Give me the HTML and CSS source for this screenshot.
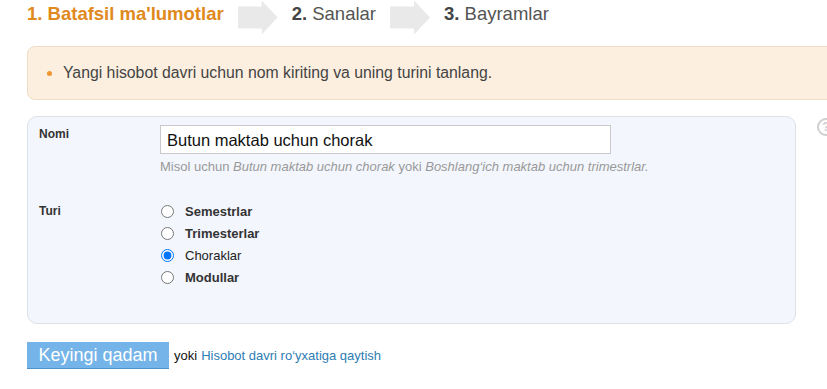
FILE: index.html
```html
<!DOCTYPE html>
<html lang="uz">
<head>
    <meta charset="UTF-8">
    <title>Hisobot davri</title>
    <link rel="stylesheet" href="styles.css">
</head>
<body>
    <div class="steps">
        <span class="step active">1. Batafsil ma'lumotlar</span>
        <span class="arrow"></span>
        <span class="step"><b>2.</b> Sanalar</span>
        <span class="arrow"></span>
        <span class="step"><b>3.</b> Bayramlar</span>
    </div>

    <div class="notice">
        <ul>
            <li>Yangi hisobot davri uchun nom kiriting va uning turini tanlang.</li>
        </ul>
    </div>

    <div class="form-wrap">
        <div class="form-box">
            <div class="row">
                <label class="row-label" for="name">Nomi</label>
                <div class="row-field">
                    <input id="name" type="text" value="Butun maktab uchun chorak">
                    <div class="hint">Misol uchun <i>Butun maktab uchun chorak</i> yoki <i>Boshlang‘ich maktab uchun trimestrlar.</i></div>
                </div>
            </div>
            <div class="row">
                <div class="row-label">Turi</div>
                <div class="row-field options">
                    <label class="option"><input type="radio" name="type"> Semestrlar</label>
                    <label class="option"><input type="radio" name="type"> Trimesterlar</label>
                    <label class="option plain"><input type="radio" name="type" checked> Choraklar</label>
                    <label class="option"><input type="radio" name="type"> Modullar</label>
                </div>
            </div>
        </div>
        <span class="help">?</span>
    </div>

    <div class="actions">
        <button>Keyingi qadam</button>
        <span class="or">yoki</span>
        <a href="#">Hisobot davri ro‘yxatiga qaytish</a>
    </div>
</body>
</html>
```

FILE: styles.css
```css
body {
    font-family: "Liberation Sans", Arial, sans-serif;
    margin: 0;
    padding: 0 0 0 27px;
    background-color: #fff;
    color: #333;
    overflow: hidden;
}
.steps {
    display: flex;
    align-items: center;
    height: 27px;
    font-size: 18.5px;
    color: #555;
}
.step.active {
    color: #e0891c;
    font-weight: bold;
}
.step b {
    color: #444;
}
.arrow {
    width: 40px;
    height: 34px;
    margin: 0 14px;
    background-color: #e9e9e9;
    clip-path: polygon(0 18%, 60% 18%, 60% 0, 100% 50%, 60% 100%, 60% 82%, 0 82%);
    position: relative;
    top: 4px;
}
.notice {
    margin-top: 19px;
    margin-right: -20px;
    background-color: #fcefdf;
    border: 1px solid #efdcc6;
    border-radius: 8px;
    height: 52px;
    display: flex;
    align-items: center;
}
.notice ul {
    margin: 0;
    padding-left: 35px;
    font-size: 15.8px;
    color: #444;
}
.notice li::marker {
    color: #f0962c;
}
.form-wrap {
    display: flex;
    align-items: flex-start;
    margin-top: 16px;
}
.form-box {
    flex-shrink: 0;
    width: 756px;
    height: 200px;
    padding: 6px 0 0 11px;
    background-color: #f3f6fd;
    border: 1px solid #dce2ea;
    border-radius: 10px;
}
.row {
    display: flex;
}
.row-label {
    width: 121px;
    font-size: 12px;
    font-weight: bold;
    color: #333;
    padding-top: 4px;
}
.row-field input[type="text"] {
    width: 451px;
    height: 29px;
    box-sizing: border-box;
    margin: 2px 0 0;
    padding: 2px 6px 0;
    border: 1px solid #c9c9c9;
    font-family: "Liberation Sans", Arial, sans-serif;
    font-size: 16.5px;
    color: #111;
}
.hint {
    margin-top: 5px;
    font-size: 13px;
    color: #999;
    height: 41px;
}
.options {
    display: flex;
    flex-direction: column;
}
.option {
    display: flex;
    align-items: center;
    height: 22px;
    font-size: 13px;
    font-weight: bold;
    color: #333;
}
.option.plain {
    font-weight: normal;
    color: #222;
}
.option input {
    margin: 0 11px 0 1px;
    width: 13px;
    height: 13px;
}
.help {
    margin: 2px 0 0 21px;
    width: 18px;
    height: 18px;
    box-sizing: border-box;
    border: 2px solid #cfcfcf;
    border-radius: 50%;
    color: #cfcfcf;
    font-size: 12px;
    font-weight: bold;
    text-align: center;
    line-height: 14px;
    flex-shrink: 0;
}
.actions {
    display: flex;
    align-items: center;
    margin-top: 18px;
    font-size: 13px;
}
button {
    background-color: #74b4e8;
    color: #fff;
    border: none;
    border-bottom: 1px solid #4f93cc;
    width: 142px;
    height: 27px;
    font-family: "Liberation Sans", Arial, sans-serif;
    font-size: 18px;
    padding: 0;
    margin-right: 5px;
    cursor: pointer;
}
.or {
    color: #111;
    margin-right: 4px;
}
a {
    color: #2e7db3;
    text-decoration: none;
}
```
